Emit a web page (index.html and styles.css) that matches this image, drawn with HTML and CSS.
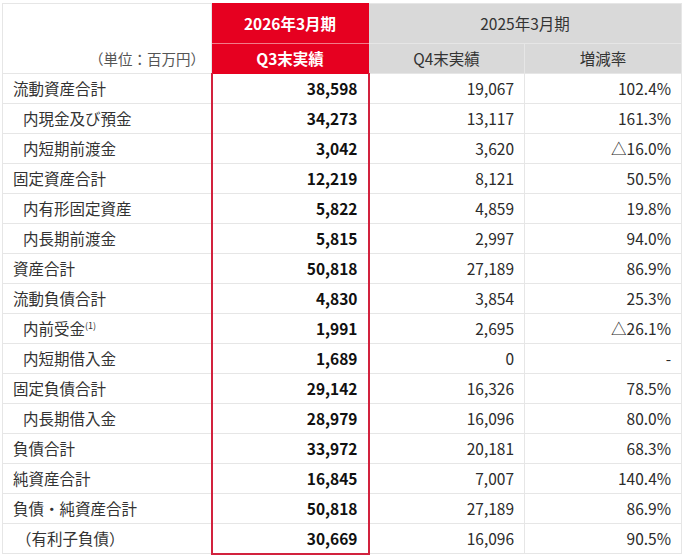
FILE: index.html
```html
<!DOCTYPE html>
<html lang="ja">
<head>
<meta charset="utf-8">
<link rel="stylesheet" href="styles.css">
</head>
<body>
<table class="bs">
  <colgroup>
    <col class="c-label">
    <col class="c-cur">
    <col class="c-prev">
    <col class="c-rate">
  </colgroup>
  <thead>
    <tr class="h1">
      <th class="unit" rowspan="2">（単位：百万円）</th>
      <th class="red top">2026年3月期</th>
      <th class="gray" colspan="2">2025年3月期</th>
    </tr>
    <tr class="h2">
      <th class="red sub">Q3末実績</th>
      <th class="gray sub">Q4末実績</th>
      <th class="gray sub">増減率</th>
    </tr>
  </thead>
  <tbody>
    <tr><td class="lbl">流動資産合計</td><td class="cur">38,598</td><td class="num">19,067</td><td class="num">102.4%</td></tr>
    <tr><td class="lbl ind">内現金及び預金</td><td class="cur">34,273</td><td class="num">13,117</td><td class="num">161.3%</td></tr>
    <tr><td class="lbl ind">内短期前渡金</td><td class="cur">3,042</td><td class="num">3,620</td><td class="num">△16.0%</td></tr>
    <tr><td class="lbl">固定資産合計</td><td class="cur">12,219</td><td class="num">8,121</td><td class="num">50.5%</td></tr>
    <tr><td class="lbl ind">内有形固定資産</td><td class="cur">5,822</td><td class="num">4,859</td><td class="num">19.8%</td></tr>
    <tr><td class="lbl ind">内長期前渡金</td><td class="cur">5,815</td><td class="num">2,997</td><td class="num">94.0%</td></tr>
    <tr><td class="lbl">資産合計</td><td class="cur">50,818</td><td class="num">27,189</td><td class="num">86.9%</td></tr>
    <tr><td class="lbl">流動負債合計</td><td class="cur">4,830</td><td class="num">3,854</td><td class="num">25.3%</td></tr>
    <tr><td class="lbl ind">内前受金<sup>(1)</sup></td><td class="cur">1,991</td><td class="num">2,695</td><td class="num">△26.1%</td></tr>
    <tr><td class="lbl ind">内短期借入金</td><td class="cur">1,689</td><td class="num">0</td><td class="num">-</td></tr>
    <tr><td class="lbl">固定負債合計</td><td class="cur">29,142</td><td class="num">16,326</td><td class="num">78.5%</td></tr>
    <tr><td class="lbl ind">内長期借入金</td><td class="cur">28,979</td><td class="num">16,096</td><td class="num">80.0%</td></tr>
    <tr><td class="lbl">負債合計</td><td class="cur">33,972</td><td class="num">20,181</td><td class="num">68.3%</td></tr>
    <tr><td class="lbl">純資産合計</td><td class="cur">16,845</td><td class="num">7,007</td><td class="num">140.4%</td></tr>
    <tr><td class="lbl">負債・純資産合計</td><td class="cur">50,818</td><td class="num">27,189</td><td class="num">86.9%</td></tr>
    <tr class="last"><td class="lbl paren">（有利子負債）</td><td class="cur">30,669</td><td class="num">16,096</td><td class="num">90.5%</td></tr>
  </tbody>
</table>
</body>
</html>
```
FILE: styles.css
```css
html, body {
  margin: 0;
  padding: 0;
  background: #ffffff;
}
body {
  padding: 3px 0 0 2px;
  font-family: "Noto Sans CJK JP", "Noto Sans", sans-serif;
  color: #2b2b2b;
}
.bs {
  border-collapse: collapse;
  table-layout: fixed;
  width: 679px;
  font-size: 15.5px;
}
.c-label { width: 209px; }
.c-cur { width: 157px; }
.c-prev { width: 156px; }
.c-rate { width: 157px; }

.bs th, .bs td {
  border: 1px solid #e6e6e6;
  padding: 0 10px;
  line-height: 1;
  white-space: nowrap;
}
.h1 { height: 40px; }
.h2 { height: 30px; }
.bs th { font-weight: normal; }
.bs .unit {
  text-align: right;
  vertical-align: bottom;
  padding: 0 6px 7px 0;
  font-size: 14.5px;
  color: #555555;
}
.red {
  background: #e60020;
  color: #ffffff;
  font-weight: bold !important;
  text-align: center;
  border-color: #e60020 !important;
}
.red.top { border-bottom: 1px solid #f27a88 !important; }
.red.sub { border-top: 1px solid #f27a88 !important; }
.gray {
  background: #d9d9d9;
  color: #333333;
  text-align: center;
  border-color: #ececec;
}
.bs tbody tr { height: 30px; }
.lbl {
  text-align: left;
  color: #333333;
}
.bs .lbl { padding-left: 10px; }
.bs .lbl.ind { padding-left: 20px; }
.bs .lbl.paren { padding-left: 13px; }
.lbl sup {
  font-size: 9px;
  vertical-align: 6px;
  line-height: 0;
}
.cur {
  text-align: right;
  font-weight: bold;
  color: #111111;
  border-left: 2px solid #d2223e !important;
  border-right: 2px solid #d2223e !important;
}
.last .cur { border-bottom: 2px solid #d2223e !important; }
.num { text-align: right; }
```
